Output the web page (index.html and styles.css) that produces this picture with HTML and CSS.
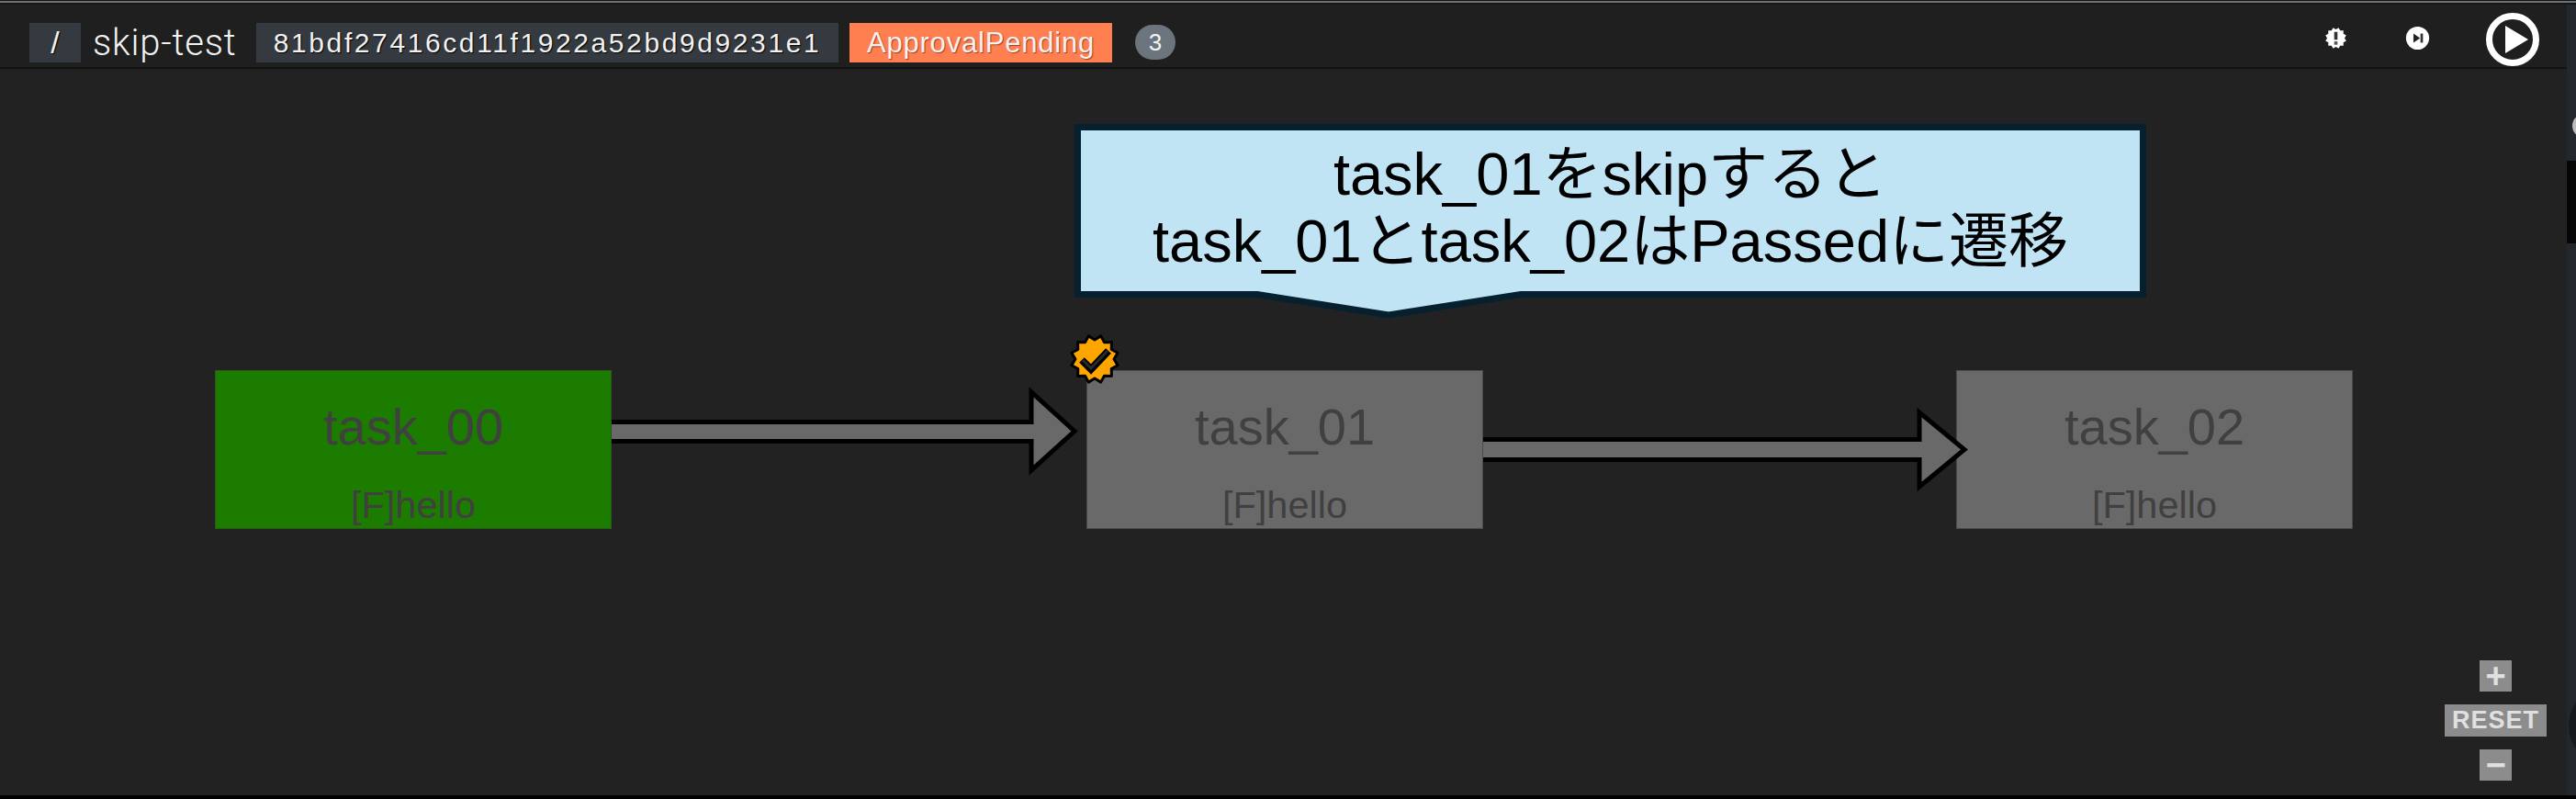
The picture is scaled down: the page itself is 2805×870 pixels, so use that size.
FILE: index.html
```html
<!DOCTYPE html>
<html>
<head>
    <title>skip-test</title>
    <meta charset="UTF-8">
    <link rel="stylesheet" href="styles.css">
</head>
<body>
    <div class="topline"></div>
    <div class="page">
        <div class="app">
            <header class="header">
                <span class="crumb crumb-root">/</span>
                <span class="pipeline">skip-test</span>
                <span class="crumb run-id">81bdf27416cd11f1922a52bd9d9231e1</span>
                <span class="status">ApprovalPending</span>
                <span class="count">3</span>
                <div class="actions">
                    <!-- notice -->
                    <svg class="icon-small" viewBox="0 0 60 60">
                        <polygon fill="#fff" points="30,9 36.7,4.9 40.5,11.8 48.4,11.6 48.2,19.5 55.1,23.3 51,30 55.1,36.7 48.2,40.5 48.4,48.4 40.5,48.2 36.7,55.1 30,51 23.3,55.1 19.5,48.2 11.6,48.4 11.8,40.5 4.9,36.7 9,30 4.9,23.3 11.8,19.5 11.6,11.6 19.5,11.8 23.3,4.9"/>
                        <rect x="26" y="15" width="8" height="19" fill="#333"/>
                        <rect x="26" y="38" width="8" height="8" fill="#555"/>
                    </svg>
                    <!-- skip -->
                    <svg class="icon-small" viewBox="0 0 60 60">
                        <circle cx="30" cy="30" r="28" fill="#fff"/>
                        <polygon points="20,19 36,30 20,41" fill="#222"/>
                        <rect x="37" y="19" width="6" height="22" fill="#333"/>
                    </svg>
                    <!-- run -->
                    <svg class="icon-play" viewBox="0 0 60 60">
                        <circle cx="30" cy="30" r="25.5" fill="none" stroke="#fff" stroke-width="7"/>
                        <polygon points="22,15 47,30 22,45" fill="#fff"/>
                    </svg>
                </div>
            </header>
            <main class="canvas">
                <div class="node node-green node-first">
                    <div class="node-name">task_00</div>
                    <div class="node-step">[F]hello</div>
                </div>
                <div class="node node-second">
                    <div class="node-name">task_01</div>
                    <div class="node-step">[F]hello</div>
                </div>
                <div class="node node-third">
                    <div class="node-name">task_02</div>
                    <div class="node-step">[F]hello</div>
                </div>

                <!-- arrows between the nodes, same coordinates as the canvas -->
                <svg class="arrows" viewBox="0 0 2795 791">
                    <polyline class="arrow" points="666,384.500 1123,384.500 1123,352 1170,394.500 1123,437 1123,405.500 666,405.500"/>
                    <polyline class="arrow" points="1615,403.500 2090,403.500 2090,374 2139,414.500 2090,455 2090,425.500 1615,425.500"/>
                </svg>

                <svg class="check-badge" viewBox="0 0 60 60">
                    <polygon fill="#ffa500" stroke="#000" stroke-width="3" stroke-linejoin="round" points="30,9 36.7,4.9 40.5,11.8 48.4,11.6 48.2,19.5 55.1,23.3 51,30 55.1,36.7 48.2,40.5 48.4,48.4 40.5,48.2 36.7,55.1 30,51 23.3,55.1 19.5,48.2 11.6,48.4 11.8,40.5 4.9,36.7 9,30 4.9,23.3 11.8,19.5 11.6,11.6 19.5,11.8 23.3,4.9"/>
                    <polyline points="16,31 26,41 45,21" fill="none" stroke="#000" stroke-width="8"/>
                    <polyline points="17,31 26,40 44,21" fill="none" stroke="#2a2a2a" stroke-width="3"/>
                </svg>

                <div class="callout">
                    <svg class="callout-shape" viewBox="0 0 1167 212">
                        <polygon fill="#c1e4f5" stroke="#06202f" stroke-width="7" points="3.500,3.500 1163.500,3.500 1163.500,185.500 486,185.500 342,208 199,185.500 3.500,185.500"/>
                    </svg>
                    <div class="callout-text">task_01をskipすると<br>task_01とtask_02はPassedに遷移</div>
                </div>

                <div class="zoom-controls">
                    <button class="zoom-btn">+</button>
                    <button class="zoom-btn zoom-reset">RESET</button>
                    <button class="zoom-btn">&minus;</button>
                </div>
            </main>
        </div>
        <div class="edge">
            <div class="edge-knob"></div>
            <div class="edge-dark"></div>
            <div class="edge-round"></div>
        </div>
    </div>
    <div class="bottomline"></div>
</body>
</html>
```

FILE: styles.css
```css
/* page frame */
body {
    margin: 0;
    width: 2805px;
    height: 870px;
    overflow: hidden;
    display: flex;
    flex-direction: column;
    font-family: "Liberation Sans", Arial, sans-serif;
    background-color: #222;
}

.topline {
    height: 5px;
    box-sizing: border-box;
    border-top: 1px solid #111;
    border-bottom: 2px solid #15181b;
    background-color: #6f7275;
}

.page {
    flex: 1;
    display: flex;
    min-height: 0;
}

.app {
    flex: 1;
    display: flex;
    flex-direction: column;
}

.edge {
    width: 10px;
    position: relative;
    overflow: hidden;
    background-color: #22282e;
}

/* bits of the window behind, cut off at the right */
.edge-knob {
    position: absolute;
    left: 6px;
    top: 120px;
    width: 22px;
    height: 24px;
    border-radius: 50%;
    background-color: #bbb;
}

.edge-dark {
    position: absolute;
    left: 0;
    top: 170px;
    width: 10px;
    height: 90px;
    background-color: #060606;
}

.edge-round {
    position: absolute;
    left: 2px;
    top: 745px;
    width: 70px;
    height: 80px;
    border-radius: 50%;
    background-color: #171a1d;
}

.bottomline {
    height: 4px;
    background-color: #000;
}

/* header bar */
.header {
    height: 70px;
    box-sizing: border-box;
    padding: 20px 0 0 32px;
    display: flex;
    align-items: flex-start;
    background-color: #1f1f1f;
    border-bottom: 2px solid #111;
    color: #f2f2f2;
}

.crumb {
    height: 43px;
    line-height: 43px;
    font-size: 30px;
    background-color: #343a40;
    text-align: center;
    text-shadow: 1px 1px 1px #000;
}

.crumb-root {
    width: 56px;
    font-size: 34px;
}

.pipeline {
    width: 178px;
    padding-left: 13px;
    line-height: 43px;
    font-size: 40px;
    font-weight: 300;
    letter-spacing: 0.800px;
    font-family: Roboto, "Liberation Sans", sans-serif;
}

.run-id {
    width: 634px;
    letter-spacing: 2.600px;
    margin-right: 12px;
}

.status {
    width: 286px;
    height: 43px;
    line-height: 43px;
    text-align: center;
    font-size: 31px;
    letter-spacing: 0.800px;
    background-color: #ff7f50;
    text-shadow: 1px 1px 1px #a04020;
}

.count {
    margin: 2px 0 0 25px;
    width: 44px;
    height: 38px;
    line-height: 38px;
    text-align: center;
    border-radius: 19px;
    font-size: 26px;
    background-color: #6c757d;
}

.actions {
    margin-left: auto;
    display: flex;
    align-items: center;
    height: 0;
    margin-top: 18px;
    padding-right: 29px;
}

.icon-small {
    width: 27px;
    height: 27px;
    margin-right: 62px;
    margin-top: -4px;
}

.icon-play {
    width: 60px;
    height: 60px;
    margin-left: -2px;
}

/* diagram, positions are the content here */
.canvas {
    flex: 1;
    position: relative;
    background-color: #222;
}

.node {
    position: absolute;
    top: 328px;
    width: 432px;
    height: 173px;
    box-sizing: border-box;
    border: 1px solid #4a4a4a;
    background-color: #696969;
    color: #404040;
    text-align: center;
}

.node-green {
    background-color: #1c7c00;
    border-color: #2a5a1a;
}

.node-first {
    left: 234px;
}

.node-second {
    left: 1183px;
}

.node-third {
    left: 2130px;
}

.node-name {
    margin-top: 31px;
    line-height: 60px;
    font-size: 56px;
}

.node-step {
    margin-top: 33px;
    line-height: 44px;
    font-size: 41.500px;
}

.arrows {
    position: absolute;
    left: 0;
    top: 0;
    width: 2795px;
    height: 791px;
}

.arrow {
    fill: #696969;
    stroke: #000;
    stroke-width: 5;
}

.check-badge {
    position: absolute;
    left: 1162px;
    top: 286px;
    width: 60px;
    height: 60px;
}

.callout {
    position: absolute;
    left: 1170px;
    top: 60px;
    width: 1167px;
    height: 212px;
}

.callout-shape {
    position: absolute;
    left: 0;
    top: 0;
    width: 1167px;
    height: 212px;
}

.callout-text {
    position: relative;
    padding-top: 18px;
    text-align: center;
    line-height: 73px;
    font-size: 65px;
    color: #000;
    font-family: "Liberation Sans", "Noto Sans CJK JP", sans-serif;
}

.zoom-controls {
    position: absolute;
    right: 22px;
    bottom: 16px;
    display: flex;
    flex-direction: column;
    align-items: center;
    gap: 14px;
}

.zoom-btn {
    width: 35px;
    height: 34px;
    padding: 0;
    border: 0;
    background-color: #8c8c8c;
    color: #e0e0e0;
    font-family: "Liberation Sans", Arial, sans-serif;
    font-size: 38px;
    font-weight: bold;
    line-height: 32px;
}

.zoom-reset {
    width: 111px;
    height: 35px;
    font-size: 27px;
    line-height: 35px;
    letter-spacing: 1px;
}
```
